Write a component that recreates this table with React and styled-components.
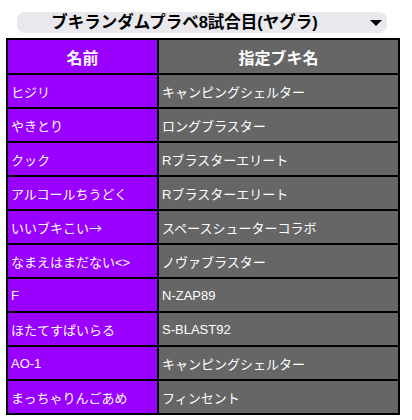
import React from "react";
import styled, { createGlobalStyle } from "styled-components";

const Global = createGlobalStyle`
  html, body { margin: 0; padding: 0; background: #ffffff; }
  body { font-family: "Liberation Sans", "Noto Sans CJK JP", sans-serif; }
`;

const Page = styled.div`
  width: 412px;
  padding: 12px 0 0 6px;
  box-sizing: border-box;
  display: flex;
  flex-direction: column;
  align-items: flex-start;
`;

const SelectBox = styled.div`
  margin-left: 11px;
  width: 370px;
  height: 21px;
  border-radius: 8px;
  background: #e9e9ed;
  display: flex;
  align-items: center;
  box-sizing: border-box;
  padding: 0 5px 0 14px;
`;

const SelectText = styled.span`
  flex: 1;
  text-align: center;
  font-family: "Liberation Sans", "Noto Sans CJK JP", sans-serif;
  font-weight: 700;
  font-size: 16.5px;
  line-height: 21px;
  color: #000;
  white-space: nowrap;
`;

const Arrow = styled.svg`
  width: 12px;
  height: 6px;
  margin: 0 0 0 32px;
  flex: none;
`;

const Table = styled.table`
  margin-top: 5px;
  width: 392px;
  border-collapse: collapse;
  border: 2px solid #000;
  table-layout: fixed;
`;

const Col = styled.col`
  width: ${(p) => p.$w}px;
`;

const HeadCell = styled.th`
  height: 33px;
  padding: 0;
  border: 2px solid #000;
  background: ${(p) => (p.$name ? "#9900ff" : "#666666")};
  color: #fff;
  font-family: "Noto Sans CJK JP", sans-serif;
  font-weight: 700;
  font-size: 16px;
  text-align: center;
  vertical-align: middle;
`;

const Cell = styled.td`
  height: 32px;
  padding: 0 0 0 3px;
  border: 2px solid #000;
  background: ${(p) => (p.$name ? "#9900ff" : "#666666")};
  color: #fff;
  font-family: "Liberation Sans", "Noto Sans CJK JP", sans-serif;
  font-size: 13px;
  text-align: left;
  vertical-align: middle;
  white-space: nowrap;
  overflow: hidden;
`;

const Wide = styled.span`
  font-family: "Noto Sans CJK JP", sans-serif;
`;

const rows = [
  ["ヒジリ", "キャンピングシェルター"],
  ["やきとり", "ロングブラスター"],
  ["クック", "Rブラスターエリート"],
  ["アルコールちうどく", "Rブラスターエリート"],
  [<>いいブキこい<Wide>→</Wide></>, "スペースシューターコラボ"],
  ["なまえはまだない<>", "ノヴァブラスター"],
  ["F", "N-ZAP89"],
  ["ほたてすぱいらる", "S-BLAST92"],
  ["AO-1", "キャンピングシェルター"],
  ["まっちゃりんごあめ", "フィンセント"],
];

export default function App() {
  return (
    <>
      <Global />
      <Page>
        <SelectBox>
          <SelectText>ブキランダムプラベ8試合目(ヤグラ)</SelectText>
          <Arrow viewBox="0 0 12 6">
            <path d="M0 0 L12 0 L6 6 Z" fill="#000" />
          </Arrow>
        </SelectBox>
        <Table>
          <colgroup>
            <Col $w={151} />
            <Col $w={241} />
          </colgroup>
          <thead>
            <tr>
              <HeadCell $name>名前</HeadCell>
              <HeadCell>指定ブキ名</HeadCell>
            </tr>
          </thead>
          <tbody>
            {rows.map(([n, w], i) => (
              <tr key={i}>
                <Cell $name>{n}</Cell>
                <Cell>{w}</Cell>
              </tr>
            ))}
          </tbody>
        </Table>
      </Page>
    </>
  );
}
